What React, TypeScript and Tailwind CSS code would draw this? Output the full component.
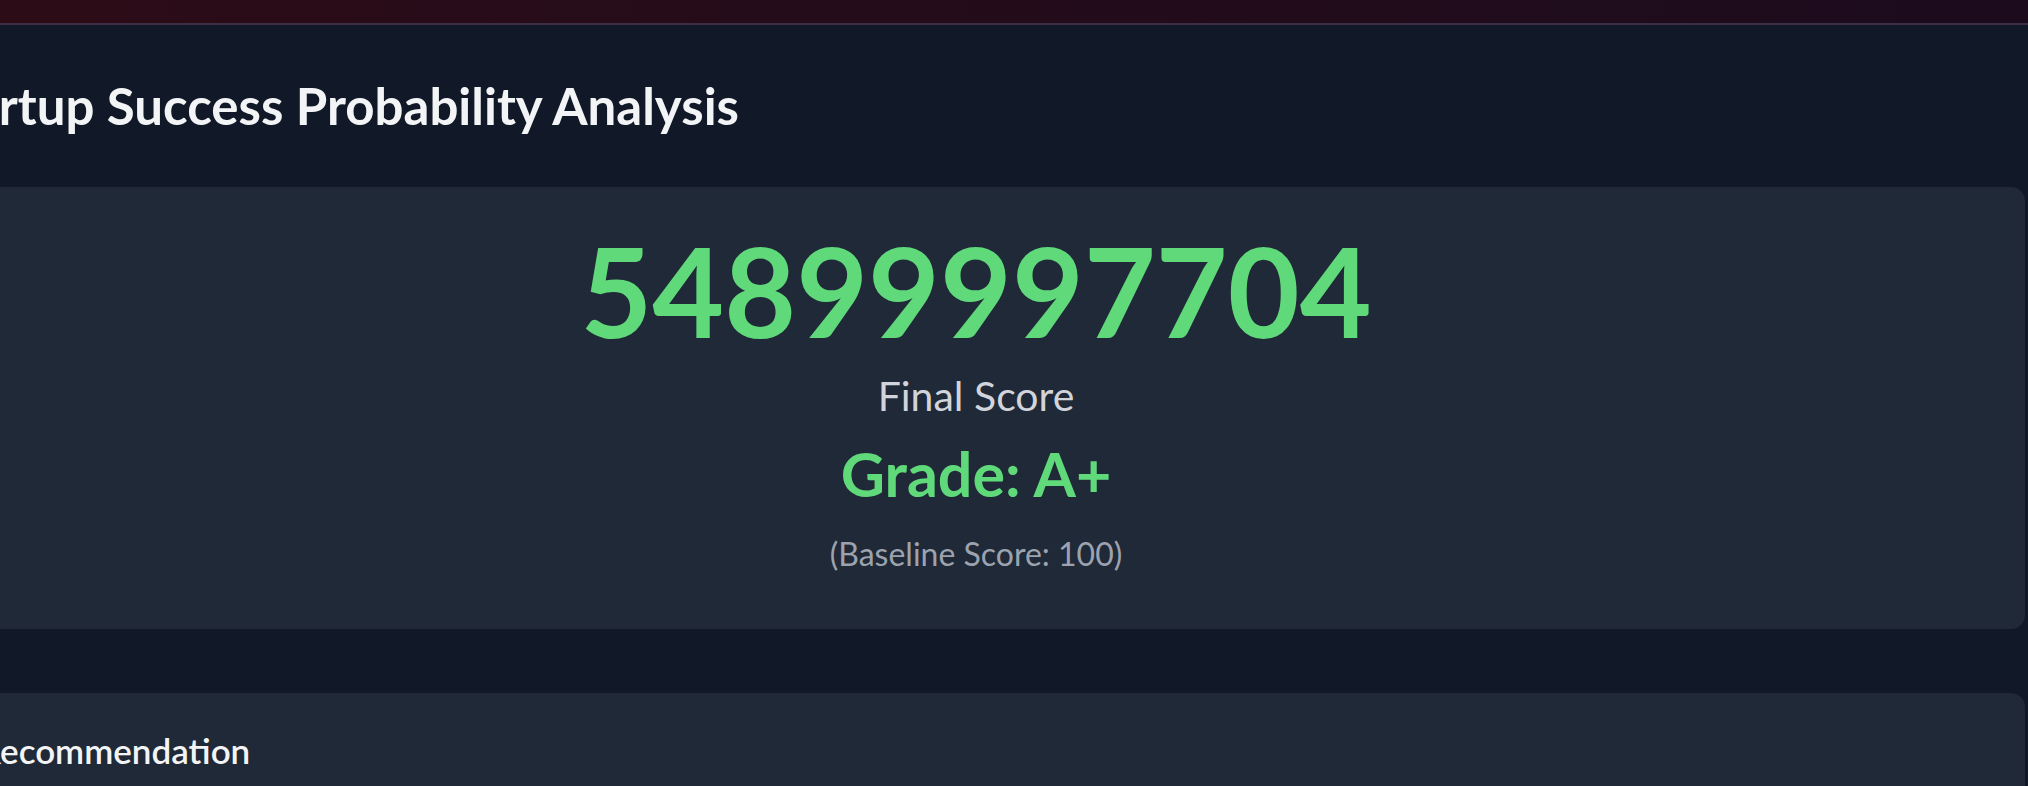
import React from "react";

type ScoreResult = {
  finalScore: number;
  grade: string;
  baseline: number;
};

const result: ScoreResult = {
  finalScore: 54899997704,
  grade: "A+",
  baseline: 100,
};

function ScoreCard({ data }: { data: ScoreResult }) {
  return (
    <section className="flex flex-col items-center rounded-[14px] bg-[#1f2937] pt-[41px] pb-[56px]">
      <div className="text-[124px] leading-none font-bold text-[#5fd97a]">{data.finalScore}</div>
      <div className="mt-[19px] text-[41px] leading-[1.2] text-[#d1d5db]">Final Score</div>
      <div className="mt-[17px] text-[61px] leading-[1.2] font-bold text-[#5fd97a]">
        Grade: {data.grade}
      </div>
      <div className="mt-[24px] text-[32px] leading-[1.2] text-[#9ca3af]">
        (Baseline Score: {data.baseline})
      </div>
    </section>
  );
}

export default function App() {
  return (
    <div className="min-h-screen overflow-hidden bg-[#111827] font-['Lato','Open_Sans',sans-serif]">
      <header className="h-[25px] border-b-2 border-[#3a2f45] bg-gradient-to-r from-[#2c0c17] to-[#1b0b1d]" />

      <main className="-ml-[73px] mr-[3px]">
        <h1 className="mt-[50px] text-[51px] leading-[1.2] font-bold text-[#f3f4f6]">
          Startup Success Probability Analysis
        </h1>

        <div className="mt-[51px]">
          <ScoreCard data={result} />
        </div>

        <section className="mt-[64px] rounded-[14px] bg-[#1f2937] px-[52px] pt-[36px] pb-[40px]">
          <h2 className="text-[35px] leading-[1.2] font-semibold text-[#f3f4f6]">Recommendation</h2>
        </section>
      </main>
    </div>
  );
}
